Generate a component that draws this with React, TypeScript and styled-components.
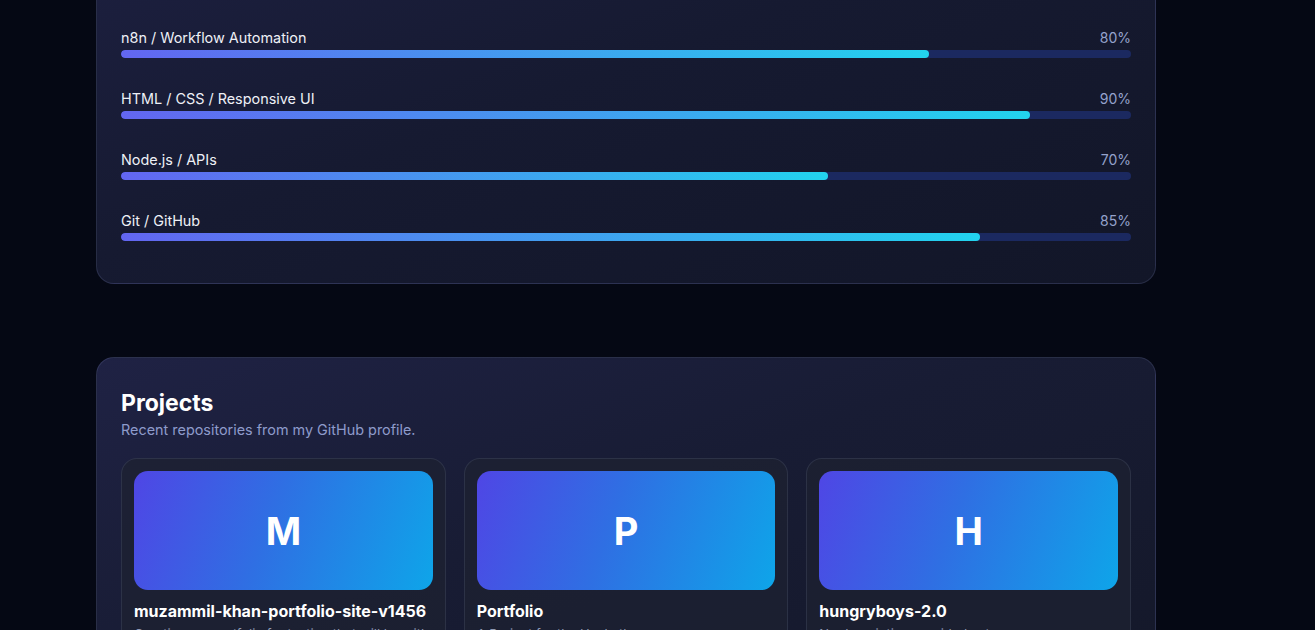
import React from 'react';
import styled, { createGlobalStyle } from 'styled-components';

const GlobalStyle = createGlobalStyle`
  html, body {
    margin: 0;
    padding: 0;
    background: #050814;
    font-family: Inter, "Noto Sans", sans-serif;
    color: #e5e7eb;
    overflow: hidden;
  }
`;

interface Skill {
  name: string;
  level: number;
}

interface Project {
  name: string;
  description: string;
}

const skills: Skill[] = [
  { name: 'n8n / Workflow Automation', level: 80 },
  { name: 'HTML / CSS / Responsive UI', level: 90 },
  { name: 'Node.js / APIs', level: 70 },
  { name: 'Git / GitHub', level: 85 },
];

const projects: Project[] = [
  { name: 'muzammil-khan-portfolio-site-v1456', description: 'Creating my portfolio for testing that will be with my site.' },
  { name: 'Portfolio', description: 'A Project for the Hackathon.' },
  { name: 'hungryboys-2.0', description: 'No description provided yet.' },
];

// the page is shown scrolled, so the skills card starts above the fold
const Page = styled.main`
  width: 1060px;
  margin: -83px 0 0 96px;
  display: flex;
  flex-direction: column;
  gap: 73px;
`;

const Card = styled.section`
  box-sizing: border-box;
  border: 1px solid rgba(148, 163, 220, 0.16);
  border-radius: 18px;
  padding: 31px 24px 42px;
  background: linear-gradient(160deg, #1d2041 0%, #161a31 45%, #121628 100%);
`;

const Heading = styled.h2`
  margin: 0 0 2px;
  font-size: 23px;
  line-height: 29px;
  font-weight: 700;
  color: #ffffff;
`;

const Subtitle = styled.p`
  margin: 0;
  font-size: 14.4px;
  line-height: 20px;
  color: #8e9bcb;
`;

const SkillList = styled.div`
  margin-top: 29px;
  display: flex;
  flex-direction: column;
  gap: 32px;
`;

const SkillRow = styled.div`
  display: flex;
  flex-direction: column;
  gap: 4px;
`;

const SkillHead = styled.div`
  display: flex;
  justify-content: space-between;
  font-size: 14px;
  line-height: 17px;
`;

const SkillName = styled.span`
  color: #eef0f6;
  font-size: 14.4px;
`;

const SkillValue = styled.span`
  color: #95a2cc;
`;

const Track = styled.div`
  height: 8px;
  border-radius: 999px;
  background: #1b2960;
  overflow: hidden;
`;

const Fill = styled.div`
  height: 100%;
  border-radius: 999px;
  background: linear-gradient(90deg, #6366f1 0%, #22d3ee 100%);
`;

const ProjectsCard = styled(Card)`
  padding-bottom: 24px;
  background: linear-gradient(160deg, #1f2244 0%, #181c34 45%, #141829 100%);
`;

const Grid = styled.div`
  margin-top: 18px;
  display: grid;
  grid-template-columns: repeat(3, 1fr);
  gap: 18px;
`;

const ProjectItem = styled.article`
  box-sizing: border-box;
  border: 1px solid rgba(148, 163, 200, 0.14);
  border-radius: 16px;
  padding: 12px;
  background: rgba(30, 34, 50, 0.75);
`;

const Thumb = styled.div`
  height: 119px;
  border-radius: 14px;
  display: flex;
  align-items: center;
  justify-content: center;
  background: linear-gradient(110deg, #4f46e5 0%, #2f6fe3 45%, #0ea5e9 100%);
  color: #ffffff;
  font-size: 38px;
  font-weight: 700;
`;

const ProjectName = styled.h3`
  margin: 11px 0 4px;
  font-size: 16px;
  line-height: 20px;
  font-weight: 700;
  color: #ffffff;
  white-space: nowrap;
  overflow: hidden;
`;

const ProjectDesc = styled.p`
  margin: 0;
  font-size: 13px;
  line-height: 19px;
  color: #8f98b3;
`;

function SkillBar ({ skill }: { skill: Skill }) {
  return (
    <SkillRow>
      <SkillHead>
        <SkillName>{skill.name}</SkillName>
        <SkillValue>{skill.level}%</SkillValue>
      </SkillHead>
      <Track>
        <Fill style={{ width: `${skill.level}%` }} />
      </Track>
    </SkillRow>
  );
}

export default function App () {
  return (
    <>
      <GlobalStyle />
      <Page>
        <Card>
          <Heading>Skills</Heading>
          <Subtitle>Tools and technologies I work with.</Subtitle>
          <SkillList>
            {skills.map((s) => <SkillBar key={s.name} skill={s} />)}
          </SkillList>
        </Card>

        <ProjectsCard>
          <Heading>Projects</Heading>
          <Subtitle>Recent repositories from my GitHub profile.</Subtitle>
          <Grid>
            {projects.map((p) => (
              <ProjectItem key={p.name}>
                <Thumb>{p.name.charAt(0).toUpperCase()}</Thumb>
                <ProjectName>{p.name}</ProjectName>
                <ProjectDesc>{p.description}</ProjectDesc>
              </ProjectItem>
            ))}
          </Grid>
        </ProjectsCard>
      </Page>
    </>
  );
}
